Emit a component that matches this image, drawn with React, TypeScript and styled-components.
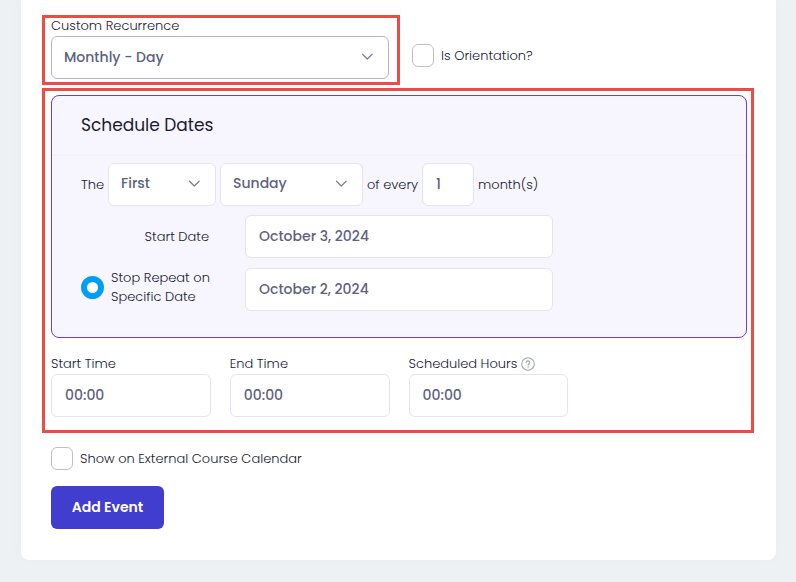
import React, { useId } from "react";
import styled, { createGlobalStyle } from "styled-components";

const GlobalStyle = createGlobalStyle`
  *, *::before, *::after { box-sizing: border-box; }
  body {
    margin: 0;
    background: #edf1f4;
    color: #181c32;
    font-family: Poppins, Inter, sans-serif;
    font-size: 13px;
    font-weight: 300;
    line-height: 19px;
  }
`;

const Page = styled.main`
  padding: 0 20px 22px 21px;
`;

const Card = styled.form`
  padding: 15px 22px 31px 21px;
  background: #ffffff;
  border-radius: 0 0 8px 8px;
  box-shadow: 0 0 20px rgba(76, 87, 125, 0.02);
`;

const TopRow = styled.div`
  display: grid;
  grid-template-columns: calc(50% + 2px) 1fr;
  align-items: center;
  column-gap: 12px;
  margin-bottom: 3px;
`;

const Highlight = styled.div`
  border: 3px solid #ed4b45;
`;

const RecurrenceBox = styled(Highlight)`
  height: 70px;
  padding: 0 8px 0 6px;
`;

const OrientationCell = styled.div`
  padding-top: 10px;
`;

const ScheduleBox = styled(Highlight)`
  padding: 4px 4px 13px 6px;
`;

const Field = styled.div`
  display: flex;
  flex-direction: column;
  min-width: 0;
`;

const Label = styled.label`
  font-size: 13px;
  line-height: 16px;
  white-space: nowrap;
`;

const LabelRow = styled.div`
  display: flex;
  align-items: center;
  gap: 4px;
  height: 16px;
  margin-bottom: 2px;
`;

const Control = styled.input`
  display: block;
  width: 100%;
  height: 43px;
  padding: 0 13px;
  border: 1px solid #e4e4ef;
  border-radius: 6px;
  outline: none;
  background: #ffffff;
  color: #5e6280;
  font-family: inherit;
  font-size: 14px;
  font-weight: 500;
`;

const SelectWrap = styled.div`
  position: relative;
`;

const SelectControl = styled(Control).attrs({ as: "select" })<{ $strong?: boolean }>`
  appearance: none;
  padding: 0 12px ${(p) => (p.$strong ? "1px" : "3px")};
  border-color: ${(p) => (p.$strong ? "#b5b5c9" : "#e4e4ef")};
`;

const Chevron = styled.svg`
  position: absolute;
  top: 14px;
  right: 15px;
  width: 13px;
  height: 13px;
  pointer-events: none;
`;

const Panel = styled.fieldset`
  min-width: 0;
  margin: 0 0 18px;
  padding: 0;
  border: 1px solid #7239ea;
  border-radius: 8px;
  background: #f7f5fe;
`;

const PanelHeader = styled.header`
  display: flex;
  align-items: center;
  height: 60px;
  padding: 0 29px 2px;
  border-bottom: 1px solid #f0eff5;
`;

const PanelTitle = styled.h2`
  margin: 0;
  color: #181c32;
  font-size: 17px;
  font-weight: 400;
  line-height: 24px;
`;

const PanelBody = styled.div`
  display: grid;
  gap: 9px;
  padding: 7px 29px 26px;
`;

const PatternRow = styled.div`
  display: grid;
  grid-template-columns: 23px 108px 143px 51px 52px auto;
  align-items: center;
  gap: 4px;
  white-space: nowrap;
`;

const DateGrid = styled.div`
  display: grid;
  grid-template-columns: 128px minmax(0, 308px);
  align-items: center;
  gap: 10px 36px;
`;

const StartLabel = styled(Label)`
  text-align: right;
`;

const CheckLabel = styled.label`
  display: flex;
  align-items: center;
  gap: 7px;
  line-height: 19px;
  white-space: nowrap;
`;

const StopLabel = styled(CheckLabel)`
  height: 43px;
  padding-bottom: 5px;
`;

const Checkbox = styled.input.attrs({ type: "checkbox" })`
  appearance: none;
  flex: none;
  width: 22px;
  height: 23px;
  margin: 0;
  border: 1px solid #bfbfbf;
  border-radius: 6px;
  background: #ffffff;
  &:checked { background: #403dcf; }
`;

const Radio = styled.input.attrs({ type: "radio" })`
  appearance: none;
  flex: none;
  width: 23px;
  height: 23px;
  margin: 0;
  border-radius: 50%;
  background: #ffffff;
  border: 1px solid #bfbfbf;
  &:checked { border: 6px solid #009ef7; }
`;

const TimeGrid = styled.div`
  display: grid;
  grid-template-columns: repeat(4, minmax(0, 1fr));
  column-gap: 19px;
`;

const ExternalRow = styled.div`
  display: flex;
  padding: 14px 9px 16px;
`;

const HelpIcon = styled.svg`
  width: 14px;
  height: 14px;
`;

const SubmitButton = styled.button`
  display: block;
  height: 43px;
  min-width: 113px;
  margin-left: 9px;
  padding: 0 18px;
  border: 0;
  border-radius: 6px;
  background: #403dcf;
  color: #ffffff;
  font-family: inherit;
  font-size: 14px;
  font-weight: 600;
`;

function Select({ options, ...rest }: { options: string[]; id?: string; $strong?: boolean; "aria-label"?: string }) {
  return (
    <SelectWrap>
      <SelectControl {...(rest as object)}>
        {options.map((o) => (
          <option key={o}>{o}</option>
        ))}
      </SelectControl>
      <Chevron viewBox="0 0 13 13" fill="none" stroke="#7e8299" strokeWidth="1.3" strokeLinecap="round" strokeLinejoin="round" aria-hidden="true">
        <path d="M1.5 4.2 6.3 9l4.8-4.8" />
      </Chevron>
    </SelectWrap>
  );
}

function TimeField({ label, help }: { label: string; help?: boolean }) {
  const id = useId();
  return (
    <Field>
      <LabelRow>
        <Label htmlFor={id}>{label}</Label>
        {help && (
          <HelpIcon viewBox="0 0 14 14" fill="none" stroke="#a1a5b7" strokeWidth="1.1" aria-hidden="true">
            <circle cx="7" cy="7" r="6.3" />
            <path d="M5.2 5.6c0-1 .8-1.7 1.8-1.7s1.8.7 1.8 1.6c0 1.1-1.7 1.3-1.7 2.5" strokeWidth="1.3" strokeLinecap="round" />
            <circle cx="7.1" cy="10" r=".8" fill="#a1a5b7" stroke="none" />
          </HelpIcon>
        )}
      </LabelRow>
      <Control id={id} type="text" defaultValue="00:00" />
    </Field>
  );
}

export default function App() {
  return (
    <>
      <GlobalStyle />
      <Page>
        <Card onSubmit={(e: React.FormEvent) => e.preventDefault()}>
          <TopRow>
            <RecurrenceBox>
              <Field>
                <LabelRow>
                  <Label htmlFor="recurrence">Custom Recurrence</Label>
                </LabelRow>
                <Select id="recurrence" $strong options={["Monthly - Day"]} />
              </Field>
            </RecurrenceBox>
            <OrientationCell>
              <CheckLabel>
                <Checkbox />
                Is Orientation?
              </CheckLabel>
            </OrientationCell>
          </TopRow>

          <ScheduleBox>
            <Panel aria-labelledby="schedule-title">
              <PanelHeader>
                <PanelTitle id="schedule-title">Schedule Dates</PanelTitle>
              </PanelHeader>
              <PanelBody>
                <PatternRow>
                  <span>The</span>
                  <Select aria-label="Week of the month" options={["First", "Second", "Third", "Fourth", "Last"]} />
                  <Select aria-label="Day of the week" options={["Sunday", "Monday", "Tuesday", "Wednesday", "Thursday", "Friday", "Saturday"]} />
                  <label htmlFor="interval">of every</label>
                  <Control id="interval" type="text" inputMode="numeric" defaultValue="1" />
                  <span>month(s)</span>
                </PatternRow>
                <DateGrid>
                  <StartLabel htmlFor="start-date">Start Date</StartLabel>
                  <Control id="start-date" type="text" defaultValue="October 3, 2024" />
                  <StopLabel>
                    <Radio name="stop" defaultChecked />
                    <span>
                      Stop Repeat on
                      <br />
                      Specific Date
                    </span>
                  </StopLabel>
                  <Control aria-label="Stop date" type="text" defaultValue="October 2, 2024" />
                </DateGrid>
              </PanelBody>
            </Panel>
            <TimeGrid>
              <TimeField label="Start Time" />
              <TimeField label="End Time" />
              <TimeField label="Scheduled Hours" help />
            </TimeGrid>
          </ScheduleBox>

          <ExternalRow>
            <CheckLabel>
              <Checkbox />
              Show on External Course Calendar
            </CheckLabel>
          </ExternalRow>
          <SubmitButton type="submit">Add Event</SubmitButton>
        </Card>
      </Page>
    </>
  );
}
